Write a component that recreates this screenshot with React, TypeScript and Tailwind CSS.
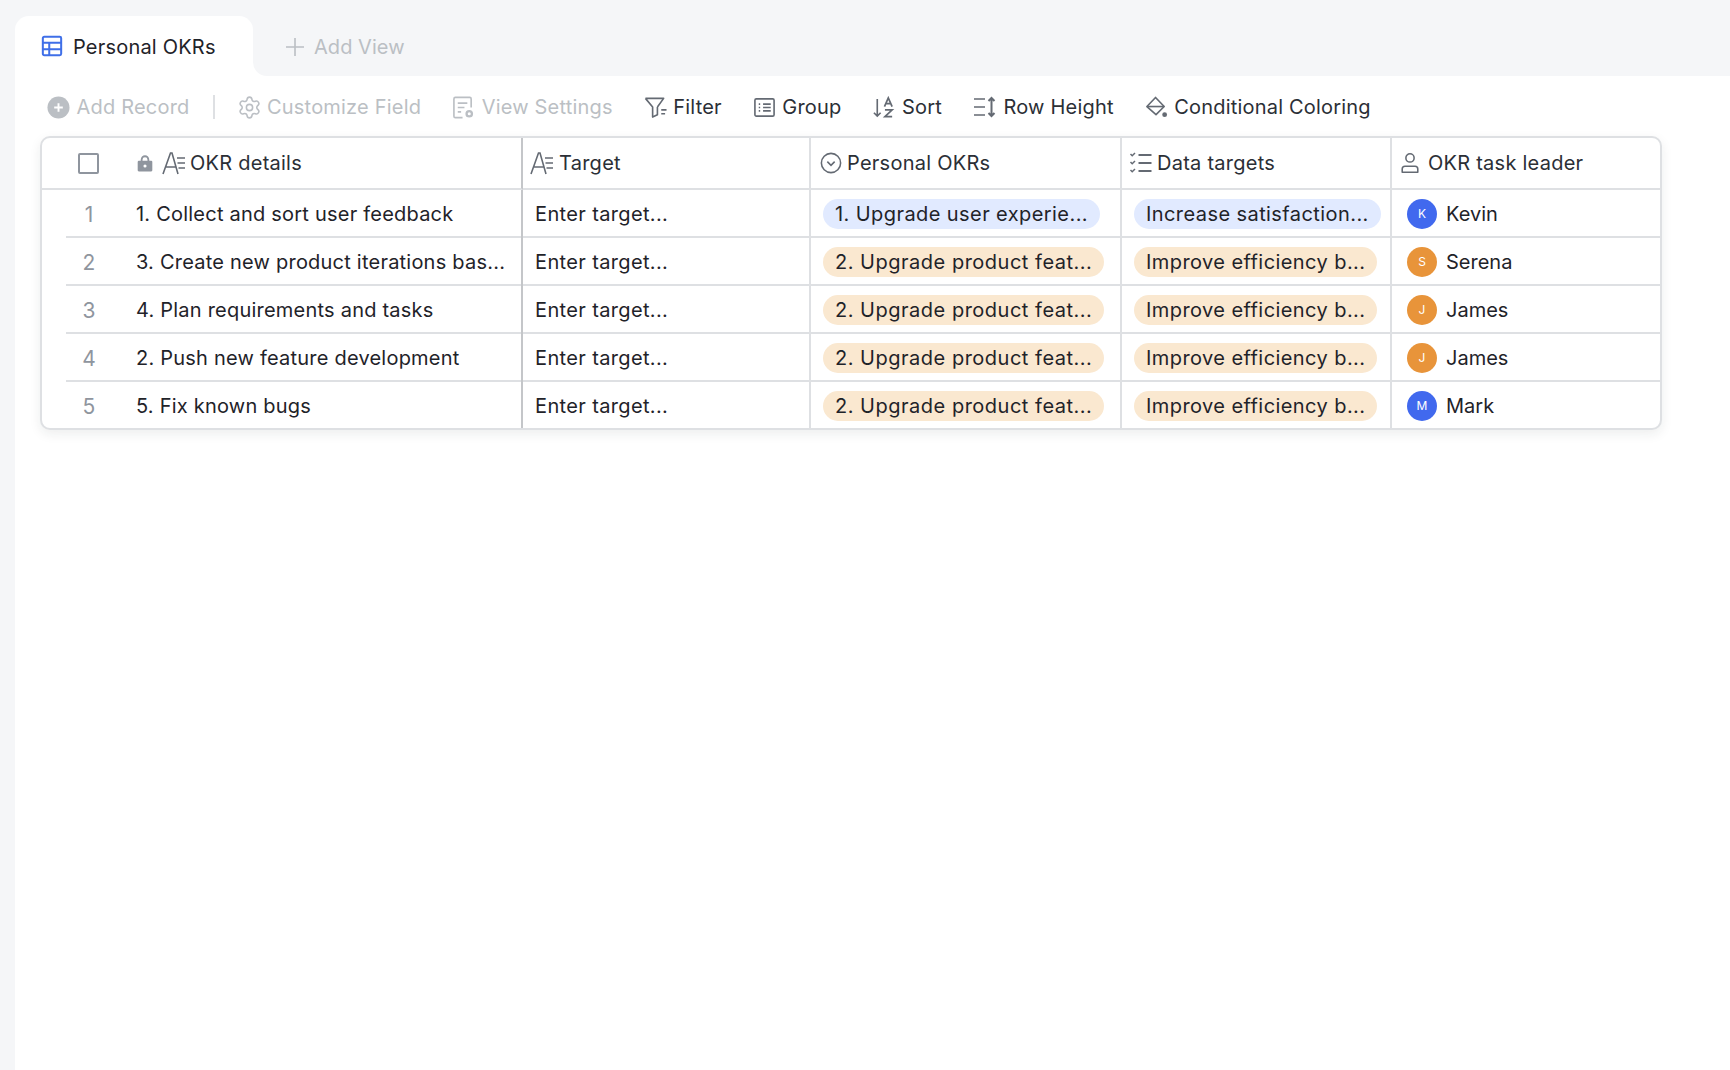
import type { ReactNode } from "react";
import { Settings } from "lucide-react";

// ---------------------------------------------------------------------------
// Icons
// ---------------------------------------------------------------------------

function Svg({ className, children }: { className?: string; children: ReactNode }) {
  return (
    <svg
      viewBox="0 0 24 24"
      fill="none"
      stroke="currentColor"
      strokeWidth="1.7"
      className={`shrink-0 ${className ?? "h-[23px] w-[23px]"}`}
    >
      {children}
    </svg>
  );
}

function TableIcon() {
  return (
    <Svg className="h-[22px] w-[22px] text-[#3f6fe8]">
      <rect x="2" y="2" width="20" height="20" rx="1.5" strokeWidth="2.2" />
      <path d="M2 8.5h20M2 15.5h20M9 8.5V22" strokeWidth="2.2" />
    </Svg>
  );
}

function PlusIcon() {
  return (
    <Svg className="h-[24px] w-[24px]">
      <path d="M12 3v18M3 12h18" strokeWidth="1.6" />
    </Svg>
  );
}

function AddCircleIcon() {
  return (
    <svg viewBox="0 0 24 24" className="h-[23px] w-[23px] shrink-0">
      <circle cx="12" cy="12" r="11.5" fill="#bbbfc4" />
      <path d="M12 7.5v9M7.5 12h9" stroke="#fff" strokeWidth="2" />
    </svg>
  );
}

function ViewSettingsIcon() {
  return (
    <Svg>
      <path d="M11 22.500H3.500A1.500 1.500 0 0 1 2 21V3A1.500 1.500 0 0 1 3.500 1.500h15A1.500 1.500 0 0 1 20 3v9" />
      <path d="M6 7.500h10M6 12h7M6 16.500h3.500" />
      <circle cx="18" cy="18.500" r="2.800" strokeWidth="2.400" />
    </Svg>
  );
}

function FilterIcon() {
  return (
    <Svg>
      <path d="M1.500 2.500h19l-6.500 9M1.500 2.500l7.500 9V22l5-2.500V11.500" strokeLinejoin="round" />
      <path d="M18 14.500h5.500M18 18.500h4" />
    </Svg>
  );
}

function GroupIcon() {
  return (
    <Svg>
      <rect x="2" y="3" width="20" height="18" rx="1.500" />
      <path d="M6 8.500h1.500M6 12h1.500M6 15.500h1.500M10.500 8.500h8M10.500 12h8M10.500 15.500h8" />
    </Svg>
  );
}

function SortIcon() {
  return (
    <Svg>
      <path d="M5.500 3v18M2 17.500 5.500 21 9 17.500" />
      <path d="M13 11 17 2l4 9M14.500 8h5M13.500 14.500h7.500l-7.500 7h7.500" strokeWidth="1.800" />
    </Svg>
  );
}

function RowHeightIcon() {
  return (
    <Svg className="h-[24px] w-[24px]">
      <path d="M1 4h11M1 12h11M1 20h11" />
      <path d="M18.500 3v18M15.500 6l3-3 3 3M15.500 18l3 3 3-3" strokeWidth="2" />
    </Svg>
  );
}

function BucketIcon() {
  return (
    <svg viewBox="0 0 24 24" fill="none" stroke="currentColor" strokeWidth="1.700" className="h-[23px] w-[23px] shrink-0">
      <path d="M11 1.500 20 11l-8.500 8.500L2 11z" strokeLinejoin="round" />
      <path d="M2 11h18" />
      <circle cx="20.500" cy="19.500" r="2.500" fill="currentColor" stroke="none" />
    </svg>
  );
}

function LockIcon() {
  return (
    <svg viewBox="0 0 16 16" className="h-[18px] w-[18px] shrink-0 text-[#8f959e]" fill="currentColor">
      <path d="M5 6.500V5a3 3 0 0 1 6 0v1.500" fill="none" stroke="currentColor" strokeWidth="1.600" />
      <rect x="1.500" y="6" width="13" height="9.500" rx="1" />
      <circle cx="8" cy="10.700" r="1.400" fill="#fff" />
    </svg>
  );
}

function TextFieldIcon() {
  return (
    <Svg className="h-[24px] w-[24px] text-[#646a73]">
      <path d="M1 23 8.500 2h1.500l6 21M4 16h10" strokeWidth="1.600" />
      <path d="M15 7h8M15.500 12h7.500M16.500 17h6.500" strokeWidth="1.600" />
    </Svg>
  );
}

function SelectIcon() {
  return (
    <Svg className="h-[22px] w-[22px] text-[#646a73]">
      <circle cx="12" cy="12" r="10.500" />
      <path d="m8 10.500 4 4 4-4" />
    </Svg>
  );
}

function ChecklistIcon() {
  return (
    <Svg className="h-[24px] w-[24px] text-[#646a73]">
      <path d="M9.500 4h13M9.500 12h13M9.500 20h13" strokeWidth="1.800" />
      <path d="m1.500 3 1.700 1.700L6 2M1.500 11l1.700 1.700L6 10M1.500 19l1.700 1.700L6 18" strokeWidth="1.500" />
    </Svg>
  );
}

function PersonIcon() {
  return (
    <Svg className="h-[22px] w-[22px] text-[#646a73]">
      <circle cx="12" cy="6.500" r="4.500" />
      <path d="M3.500 22v-3.500a3 3 0 0 1 3-3h11a3 3 0 0 1 3 3V22z" strokeLinejoin="round" />
    </Svg>
  );
}

// ---------------------------------------------------------------------------
// Data
// ---------------------------------------------------------------------------

interface Row {
  title: string;
  okr: string;
  target: string;
  tone: "blue" | "orange";
  leader: string;
  avatar: "blue" | "orange";
}

const ROWS: Row[] = [
  { title: "1. Collect and sort user feedback", okr: "1. Upgrade user experie...", target: "Increase satisfaction...", tone: "blue", leader: "Kevin", avatar: "blue" },
  { title: "3. Create new product iterations bas...", okr: "2. Upgrade product feat...", target: "Improve efficiency b...", tone: "orange", leader: "Serena", avatar: "orange" },
  { title: "4. Plan requirements and tasks", okr: "2. Upgrade product feat...", target: "Improve efficiency b...", tone: "orange", leader: "James", avatar: "orange" },
  { title: "2. Push new feature development", okr: "2. Upgrade product feat...", target: "Improve efficiency b...", tone: "orange", leader: "James", avatar: "orange" },
  { title: "5. Fix known bugs", okr: "2. Upgrade product feat...", target: "Improve efficiency b...", tone: "orange", leader: "Mark", avatar: "blue" },
];

// ---------------------------------------------------------------------------
// Sub-components
// ---------------------------------------------------------------------------

function ToolbarItem({ icon, label, muted }: { icon: ReactNode; label: string; muted?: boolean }) {
  return (
    <div className={`flex items-center gap-[6.5px] ${muted ? "text-[#bbbfc4]" : "text-[#2b2f36]"}`}>
      <span className={muted ? "text-[#bbbfc4]" : "text-[#646a73]"}>{icon}</span>
      <span className="tracking-[0.2px]">{label}</span>
    </div>
  );
}

function Pill({ tone, wide, children }: { tone: "blue" | "orange"; wide?: boolean; children: ReactNode }) {
  return (
    <span
      className={`flex h-[30px] items-center whitespace-nowrap rounded-full px-3 text-[#1f2329] ${
        wide ? "tracking-[0.51px]" : "tracking-[0.42px]"
      } ${tone === "blue" ? "bg-[#e1eaff]" : "bg-[#fae8d0]"}`}
    >
      {children}
    </span>
  );
}

function HeaderCell({ icon, label, last, inset, gap }: { icon: ReactNode; label: string; last?: boolean; inset: string; gap: string }) {
  return (
    <div className={`flex items-center border-b-2 border-[#dee0e3] text-[#2b2f36] ${inset} ${gap} ${last ? "" : "border-r-2"}`}>
      {icon}
      <span className="tracking-[0.25px]">{label}</span>
    </div>
  );
}

// ---------------------------------------------------------------------------
// App
// ---------------------------------------------------------------------------

export default function App() {
  return (
    <div className="flex min-h-[1070px] bg-[#f5f6f8] text-[20px] leading-[28px] [font-family:Inter,'Liberation_Sans',sans-serif]">
      {/* Left gutter */}
      <div className="w-[15px] shrink-0" />

      <div className="flex min-w-0 flex-1 flex-col">
        {/* Tabs */}
        <div className="flex h-[76px]">
          <div className="w-[238px] pt-4">
            <div className="flex h-[60px] items-center gap-[10px] rounded-t-[14px] bg-white pl-[26px] text-[#1f2329]">
              <TableIcon />
              <span className="pt-[2px] tracking-[0.2px]">Personal OKRs</span>
            </div>
          </div>
          <div className="flex-1 bg-white">
            <div className="flex h-full items-center gap-[7px] rounded-bl-[14px] bg-[#f5f6f8] pl-[30px] pt-[17px] text-[#bbbfc4]">
              <PlusIcon />
              <span className="tracking-[0.05px]">Add View</span>
            </div>
          </div>
        </div>

        {/* Content */}
        <div className="flex-1 bg-white pl-[25px]">
          {/* Toolbar */}
          <div className="flex h-[60px] items-center pl-[7px] pt-[2px]">
            <ToolbarItem muted icon={<AddCircleIcon />} label="Add Record" />
            <div className="mx-[23px] h-[24px] w-[2px] bg-[#dee0e3]" />
            <div className="flex items-center gap-[31px]">
              <ToolbarItem muted icon={<Settings size={25} strokeWidth={1.5} className="-mx-px shrink-0" />} label="Customize Field" />
              <ToolbarItem muted icon={<ViewSettingsIcon />} label="View Settings" />
              <ToolbarItem icon={<FilterIcon />} label="Filter" />
              <ToolbarItem icon={<GroupIcon />} label="Group" />
              <ToolbarItem icon={<SortIcon />} label="Sort" />
              <ToolbarItem icon={<RowHeightIcon />} label="Row Height" />
              <ToolbarItem icon={<BucketIcon />} label="Conditional Coloring" />
            </div>
          </div>

          {/* Table */}
          <div className="grid w-[1622px] grid-cols-[481px_288px_311px_270px_1fr] grid-rows-[52px_repeat(4,48px)_46px] overflow-hidden rounded-[10px] border-2 border-[#dee0e3] bg-white shadow-[0_4px_12px_rgba(31,35,41,0.08)]">
            <div className="flex items-center border-b-2 border-r-2 border-b-[#dee0e3] border-r-[#c4c6c9] pl-[36px] text-[#2b2f36]">
              <span className="h-[21px] w-[21px] shrink-0 rounded-[2px] border-2 border-[#8f959e]" />
              <span className="ml-[37px]">
                <LockIcon />
              </span>
              <span className="ml-[8px] mr-[4px]">
                <TextFieldIcon />
              </span>
              <span className="tracking-[0.25px]">OKR details</span>
            </div>
            <HeaderCell inset="pl-[7px]" gap="gap-[5px]" icon={<TextFieldIcon />} label="Target" />
            <HeaderCell inset="pl-[9px]" gap="gap-[5px]" icon={<SelectIcon />} label="Personal OKRs" />
            <HeaderCell inset="pl-[7px]" gap="gap-[4px]" icon={<ChecklistIcon />} label="Data targets" />
            <HeaderCell last inset="pl-[7px]" gap="gap-[7px]" icon={<PersonIcon />} label="OKR task leader" />

            {ROWS.map((row, i) => {
              const bottom = i < ROWS.length - 1 ? "border-b-2" : "";
              return (
                <div key={i} className="contents">
                  <div className="border-r-2 border-[#c4c6c9] pl-6">
                    <div className={`flex h-full items-center border-[#dee0e3] pt-[2px] ${bottom}`}>
                      <span className="w-[46px] pt-[2px] text-center text-[21px] text-[#8f959e]">{i + 1}</span>
                      <span className="ml-[24px] whitespace-nowrap tracking-[0.22px] text-[#1f2329]">{row.title}</span>
                    </div>
                  </div>
                  <div className={`flex items-center border-r-2 border-[#dee0e3] pl-[12px] pt-[2px] tracking-[0.36px] text-[#1f2329] ${bottom}`}>
                    Enter target...
                  </div>
                  <div className={`flex items-center border-r-2 border-[#dee0e3] pl-[12px] pt-[2px] ${bottom}`}>
                    <Pill tone={row.tone} wide={row.tone === "orange"}>{row.okr}</Pill>
                  </div>
                  <div className={`flex items-center border-r-2 border-[#dee0e3] pl-[12px] pt-[2px] ${bottom}`}>
                    <Pill tone={row.tone}>{row.target}</Pill>
                  </div>
                  <div className={`flex items-center border-[#dee0e3] pl-[15px] pt-[2px] text-[#1f2329] ${bottom}`}>
                    <span
                      className={`flex h-[30px] w-[30px] items-center justify-center rounded-full text-[12px] text-white ${
                        row.avatar === "blue" ? "bg-[#4169ee]" : "bg-[#e8943a]"
                      }`}
                    >
                      {row.leader[0]}
                    </span>
                    <span className="ml-[9px]">{row.leader}</span>
                  </div>
                </div>
              );
            })}
          </div>
        </div>
      </div>
    </div>
  );
}
